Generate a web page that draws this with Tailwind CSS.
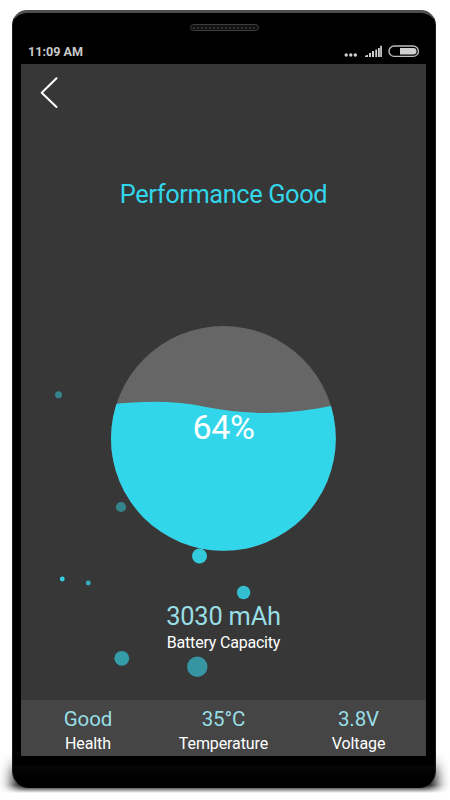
<!DOCTYPE html>
<html lang="en">

<head>
    <meta charset="UTF-8">
    <meta name="viewport" content="width=device-width, initial-scale=1.0">
    <title>Battery Performance</title>
    <script src="https://cdn.jsdelivr.net/npm/@tailwindcss/browser@4"></script>
</head>

<body class="bg-white font-['Roboto',sans-serif] overflow-hidden">
    <div class="relative w-[450px] h-[800px] overflow-hidden pt-[10px] pl-3">

        <!-- Shadow under the phone -->
        <svg class="absolute left-0 top-0" width="450" height="800" viewBox="0 0 450 800">
            <defs>
                <filter id="soft" x="-20%" y="-80%" width="140%" height="260%">
                    <feGaussianBlur stdDeviation="7 8" />
                </filter>
                <linearGradient id="fade" x1="0" y1="785" x2="0" y2="793" gradientUnits="userSpaceOnUse">
                    <stop offset="0" stop-color="#fff" />
                    <stop offset="1" stop-color="#000" />
                </linearGradient>
                <mask id="floor" maskUnits="userSpaceOnUse" x="0" y="740" width="450" height="60">
                    <rect x="0" y="740" width="450" height="60" fill="url(#fade)" />
                </mask>
            </defs>
            <g mask="url(#floor)">
                <rect x="13" y="767" width="423" height="60" fill="#000" filter="url(#soft)" />
            </g>
        </svg>

        <!-- Phone -->
        <div class="relative w-[424px] h-[778px] flex flex-col items-center rounded-t-[15px] rounded-b-[17px] bg-gradient-to-b from-black from-[97%] via-[#070707] via-[97.2%] to-black border-t-[3px] border-x border-t-[#4b4f4e] border-x-[#1b1b1b]">
            <div class="mt-[11px] w-[69px] h-[7px] shrink-0 rounded-full border border-[#3d3d3d] bg-[#111] flex items-center justify-center">
                <div class="w-[62px] border-t-2 border-dotted border-[#303030]"></div>
            </div>

            <!-- Status bar -->
            <div class="mr-px w-[405px] h-[33px] shrink-0 flex items-center justify-between pl-[7px] pr-[6px] pt-[8px]">
                <span class="text-[12.6px] leading-4 font-bold text-[#c9c9c9]">11:09 AM</span>
                <svg class="mb-0.5" width="76" height="14" viewBox="344 44 76 14" fill="#d0d0d0">
                    <circle cx="346.2" cy="55" r="1.7" />
                    <circle cx="350.8" cy="55" r="1.7" />
                    <circle cx="355.3" cy="55" r="1.7" />
                    <path d="M365 57v-1.2l3-1V57zM369 57v-4h2v4zM372 57v-6h2v6zM375.3 57v-7.5h1.8V57zM378 57v-9h1.8v9zM380.2 57V45.8h1.7V57z" />
                    <rect x="389" y="46" width="29.4" height="10.4" rx="5.2" fill="none" stroke="#bdbdbd" stroke-width="1.4" />
                    <path d="M400 48h13.3a3.2 3.2 0 0 1 0 6.4H400z" />
                </svg>
            </div>

            <!-- Screen -->
            <div class="relative mr-px w-[405px] h-[692px] shrink-0 bg-[#373737] flex flex-col">
                <svg class="absolute left-0 top-0" width="405" height="692" viewBox="21 64 405 692">
                    <defs>
                        <clipPath id="gauge">
                            <circle cx="223.4" cy="438.4" r="112.4" />
                        </clipPath>
                    </defs>
                    <circle cx="223.4" cy="438.4" r="112.4" fill="#666666" />
                    <path clip-path="url(#gauge)" fill="#32d6ea" d="M106 405 C142 401 172 400 206 407 C252 415.500 288 415 336 405 V560 H106Z" />
                    <g>
                        <circle cx="58.500" cy="394.700" r="3.500" fill="#36838c" />
                        <circle cx="121" cy="507" r="5.100" fill="#36838c" />
                        <circle cx="62.300" cy="579" r="2.400" fill="#35cfe2" />
                        <circle cx="88.300" cy="583" r="2.400" fill="#34afbd" />
                        <circle cx="199.500" cy="556" r="7.500" fill="#33cadc" />
                        <circle cx="243.600" cy="592.500" r="6.700" fill="#33bfcf" />
                        <circle cx="121.800" cy="658.300" r="7.400" fill="#359daa" />
                        <circle cx="197.300" cy="666.700" r="10.200" fill="#3695a1" />
                    </g>
                </svg>

                <header class="relative h-14 pl-[18px] pt-[11px]">
                    <svg width="22" height="34" viewBox="0 0 22 34" fill="none" stroke="#fff" stroke-width="2" stroke-linecap="round" stroke-linejoin="round">
                        <path d="M17.500 3.300 L2.700 17.800 L17.500 32" />
                    </svg>
                </header>

                <main class="relative flex-1 flex flex-col items-center text-center">
                    <h1 class="mt-[58px] text-[25.400px] leading-8 tracking-[-0.4px] text-[#32d6ea]">Performance Good</h1>
                    <div class="mt-[200px] text-[34px] leading-[34px] tracking-[-0.3px] text-white">64%</div>
                    <div class="mt-[156px] text-[25.4px] leading-8 tracking-[-0.2px] text-[#98dee5]">3030 mAh</div>
                    <div class="mt-[1px] text-base leading-5 tracking-[-0.2px] text-white">Battery Capacity</div>
                </main>

                <footer class="relative h-14 bg-[#454545] grid grid-cols-3 text-center tracking-[-0.1px] pt-[7px]">
                    <div class="pr-px">
                        <div class="text-[20.500px] leading-6 text-[#98dee5]">Good</div>
                        <div class="text-base leading-[26px] text-white">Health</div>
                    </div>
                    <div>
                        <div class="text-[20.500px] leading-6 text-[#98dee5]">35°C</div>
                        <div class="text-base leading-[26px] text-white">Temperature</div>
                    </div>
                    <div>
                        <div class="text-[20.500px] leading-6 text-[#98dee5]">3.8V</div>
                        <div class="text-base leading-[26px] text-white">Voltage</div>
                    </div>
                </footer>
            </div>
        </div>
    </div>
</body>

</html>
